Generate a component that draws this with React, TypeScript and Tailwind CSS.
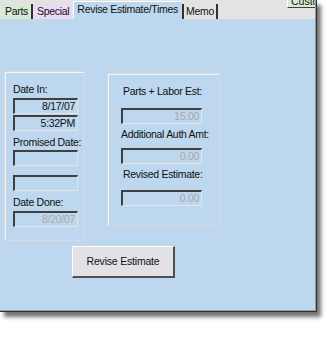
import React from 'react';

const font = { fontFamily: '"Liberation Sans", Arial, sans-serif' };

function Field({ value, dim }: { value?: string; dim?: boolean }) {
  return (
    <div
      className={
        'h-[16px] border-t-[2px] border-l-[2px] border-r border-b border-t-[#404040] border-l-[#404040] border-r-[#e4e4e4] border-b-[#e4e4e4] bg-[#bdd7ee] flex items-center justify-end pr-[2px] text-[10.5px] tracking-[-0.3px] leading-none whitespace-nowrap ' +
        (dim ? 'text-[#a8a8a8]' : 'text-[#111]')
      }
    >
      {value}
    </div>
  );
}

function Label({ children }: { children: React.ReactNode }) {
  return <div className="text-[10.5px] tracking-[-0.3px] leading-none text-[#111] whitespace-nowrap">{children}</div>;
}

const tabText = 'text-[10.5px] tracking-[-0.3px] leading-[15px] text-[#111] whitespace-nowrap';

export default function App() {
  return (
    <div className="w-[327px] h-[338px] bg-white overflow-hidden" style={font}>
      <div className="w-[317px] h-[312px] flex flex-col border-r border-b border-[#303030] shadow-[4px_5px_4px_rgba(0,0,0,0.55)]">
        {/* tab strip */}
        <div className="h-[19px] bg-[#e3e3e3] flex items-end relative border-r border-[#9a9a9a]">
          <div className={'h-[15px] ml-[2px] px-[3px] bg-[#d7ebd3] border-r-[2px] border-[#303030] ' + tabText}>Parts</div>
          <div className={'h-[15px] ml-[1px] px-[3px] bg-[#ecd9f3] ' + tabText}>Special</div>
          <div className={'h-[18px] ml-[1px] pl-[3px] pr-[4px] bg-[#bdd7ee] border-t border-l border-white ' + tabText}>Revise Estimate/Times</div>
          <div className={'h-[15px] px-[2px] bg-[#e3e3e3] border-l-[2px] border-r-[2px] border-[#303030] ' + tabText}>Memo</div>
          <div className="absolute right-0 top-[-3px] w-[28px] h-[11px] bg-[#dcebd6] border-b border-[#404040] border-l border-l-white text-[10.5px] leading-[9px] pl-[3px] text-[#111] overflow-hidden">Custo</div>
        </div>
        {/* body */}
        <div className="flex-1 bg-[#bdd7ee] border-r border-b border-[#9a9a9a]">
          <div className="flex items-start mt-[52px]">
            <div className="ml-[4px] w-[81px] h-[170px] border border-[#d9d9d9] shadow-[inset_1px_1px_0_#f4f4f4] pl-[8px] pr-[6px] pt-[12px]">
              <Label>Date In:</Label>
              <div className="mt-[3px]"><Field value="8/17/07" /></div>
              <div className="mt-[1px]"><Field value="5:32PM" /></div>
              <div className="mt-[6px]"><Label>Promised Date:</Label></div>
              <div className="mt-[3px]"><Field /></div>
              <div className="mt-[9px]"><Field /></div>
              <div className="mt-[6px]"><Label>Date Done:</Label></div>
              <div className="mt-[3px]"><Field value="8/20/07" dim /></div>
            </div>
            <div className="ml-[22px] mt-[2px] w-[113px] h-[153px] border border-[#d9d9d9] shadow-[inset_1px_1px_0_#f4f4f4] pl-[13px] pr-[17px] pt-[12px]">
              <div className="pl-[2px]"><Label>Parts + Labor Est:</Label></div>
              <div className="mt-[11px]"><Field value="15.00" dim /></div>
              <div className="mt-[5px]"><Label>Additional Auth Amt:</Label></div>
              <div className="mt-[9px]"><Field value="0.00" dim /></div>
              <div className="mt-[5px] pl-[2px]"><Label>Revised Estimate:</Label></div>
              <div className="mt-[10px]"><Field value="0.00" dim /></div>
            </div>
          </div>
          <button className="mt-[5px] ml-[72px] w-[103px] h-[32px] bg-[#e2e1e6] border-t border-l border-t-white border-l-white border-r-[2px] border-b-[2px] border-r-[#505050] border-b-[#505050] text-[10.5px] tracking-[-0.2px] text-[#111]" style={font}>
            Revise Estimate
          </button>
        </div>
      </div>
    </div>
  );
}
